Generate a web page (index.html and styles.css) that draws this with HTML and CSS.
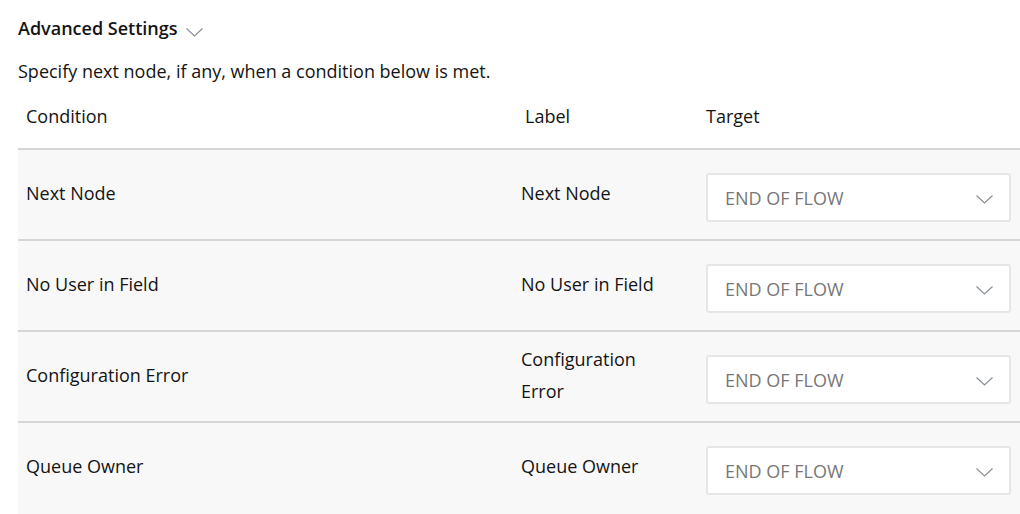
FILE: index.html
```html
<!DOCTYPE html>
<html>
<head>
<meta charset="utf-8">
<link rel="stylesheet" href="styles.css">
</head>
<body>
<div class="panel">
  <div class="title">
    <span>Advanced Settings</span>
    <svg class="title-chev" width="17" height="9" viewBox="0 0 17 9"><path d="M0.5 0.5 L8.5 8 L16.5 0.5" fill="none" stroke="#8a8f99" stroke-width="1.2"/></svg>
  </div>
  <p class="desc">Specify next node, if any, when a condition below is met.</p>
  <div class="table">
    <div class="row head">
      <div class="cell c1">Condition</div>
      <div class="cell c2">Label</div>
      <div class="cell c3">Target</div>
    </div>
    <div class="row">
      <div class="cell c1">Next Node</div>
      <div class="cell c2">Next Node</div>
      <div class="cell c3"><div class="select"><span>END OF FLOW</span><svg width="17" height="9" viewBox="0 0 17 9"><path d="M0.5 0.5 L8.5 8 L16.5 0.5" fill="none" stroke="#8a8f99" stroke-width="1.2"/></svg></div></div>
    </div>
    <div class="row">
      <div class="cell c1">No User in Field</div>
      <div class="cell c2">No User in Field</div>
      <div class="cell c3"><div class="select"><span>END OF FLOW</span><svg width="17" height="9" viewBox="0 0 17 9"><path d="M0.5 0.5 L8.5 8 L16.5 0.5" fill="none" stroke="#8a8f99" stroke-width="1.2"/></svg></div></div>
    </div>
    <div class="row">
      <div class="cell c1">Configuration Error</div>
      <div class="cell c2">Configuration Error</div>
      <div class="cell c3"><div class="select"><span>END OF FLOW</span><svg width="17" height="9" viewBox="0 0 17 9"><path d="M0.5 0.5 L8.5 8 L16.5 0.5" fill="none" stroke="#8a8f99" stroke-width="1.2"/></svg></div></div>
    </div>
    <div class="row last">
      <div class="cell c1">Queue Owner</div>
      <div class="cell c2">Queue Owner</div>
      <div class="cell c3"><div class="select"><span>END OF FLOW</span><svg width="17" height="9" viewBox="0 0 17 9"><path d="M0.5 0.5 L8.5 8 L16.5 0.5" fill="none" stroke="#8a8f99" stroke-width="1.2"/></svg></div></div>
    </div>
  </div>
</div>
</body>
</html>
```
FILE: styles.css
```css
html, body {
  margin: 0;
  padding: 0;
  background: #ffffff;
}
body {
  font-family: "Open Sans", "Liberation Sans", sans-serif;
  color: #141414;
  font-size: 18px;
  overflow: hidden;
}
.panel {
  padding: 14px 0 0 18px;
}
.title {
  display: flex;
  align-items: center;
  gap: 8px;
  font-size: 18px;
  font-weight: 600;
  line-height: 28px;
}
.title-chev {
  margin-top: 8px;
}
.desc {
  margin: 16px 0 0 0;
  line-height: 26px;
}
.table {
  margin-top: 16px;
}
.row {
  display: grid;
  grid-template-columns: 495px 184px 1fr;
  align-items: center;
  height: 89px;
  border-top: 2px solid #d6d6d6;
  background: #f8f8f8;
}
.row.head {
  height: 48px;
  border-top: none;
  background: #ffffff;
  align-items: start;
}
.row.last {
  height: 89px;
  padding-bottom: 10px;
}
.cell {
  padding: 0 8px;
  line-height: 32px;
}
.row:not(.head) .c1,
.row:not(.head) .c2 {
  padding-bottom: 3px;
}
.c2 {
  padding-right: 24px;
}
.head .c2 {
  padding-left: 12px;
}
.c3 {
  padding-left: 9px;
  padding-right: 9px;
}
.select {
  margin-top: 6px;
  height: 45px;
  border: 2px solid #e6e6e6;
  border-radius: 3px;
  background: #ffffff;
  display: flex;
  align-items: center;
  justify-content: space-between;
  padding: 0 16px 0 17px;
  color: #777777;
}
.select svg {
  margin-top: 3px;
}
```
